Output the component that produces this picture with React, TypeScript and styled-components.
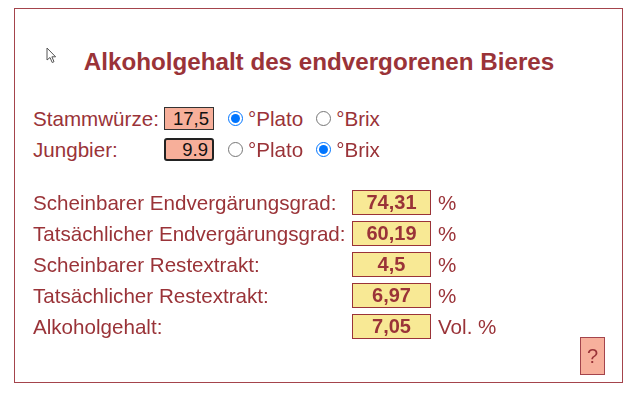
import React, { useEffect, useRef } from "react";
import styled, { createGlobalStyle } from "styled-components";

const GlobalStyle = createGlobalStyle`
  html, body {
    margin: 0;
    padding: 0;
    background: #ffffff;
  }
  body {
    font-family: "Liberation Sans", Arial, sans-serif;
  }
`;

const RED = "#9a3338";

const results = [
  { label: "Scheinbarer Endvergärungsgrad:", value: "74,31", unit: "%" },
  { label: "Tatsächlicher Endvergärungsgrad:", value: "60,19", unit: "%" },
  { label: "Scheinbarer Restextrakt:", value: "4,5", unit: "%" },
  { label: "Tatsächlicher Restextrakt:", value: "6,97", unit: "%" },
  { label: "Alkoholgehalt:", value: "7,05", unit: "Vol. %" },
];

const App: React.FC = () => {
  const focusRef = useRef<HTMLInputElement>(null);

  useEffect(() => {
    const el = focusRef.current;
    if (el) {
      el.focus();
      el.setSelectionRange(el.value.length, el.value.length);
    }
  }, []);

  return (
    <>
      <GlobalStyle />
      <Page>
        <Panel>
          <Pointer width="11" height="17" viewBox="0 0 11 17">
            <path
              d="M1 1 L1 13 L4 10.5 L6.2 15.5 L8 14.7 L5.9 9.8 L9.6 9.8 Z"
              fill="#ffffff"
              stroke="#555555"
              strokeWidth="1"
              strokeLinejoin="round"
            />
          </Pointer>
          <Title>Alkoholgehalt des endvergorenen Bieres</Title>

          <InputGrid>
            <Label>Stammwürze:</Label>
            <Entry defaultValue="17,5" />
            <RadioGroup>
              <Radio type="radio" name="stamm" defaultChecked />
              <Option>°Plato</Option>
              <Radio type="radio" name="stamm" />
              <Option>°Brix</Option>
            </RadioGroup>

            <Label>Jungbier:</Label>
            <Entry ref={focusRef} defaultValue="9.9" $focused />
            <RadioGroup>
              <Radio type="radio" name="jung" />
              <Option>°Plato</Option>
              <Radio type="radio" name="jung" defaultChecked />
              <Option>°Brix</Option>
            </RadioGroup>
          </InputGrid>

          <ResultGrid>
            {results.map((r) => (
              <React.Fragment key={r.label}>
                <Label>{r.label}</Label>
                <ValueBox>{r.value}</ValueBox>
                <Unit>{r.unit}</Unit>
              </React.Fragment>
            ))}
          </ResultGrid>

          <Footer>
            <HelpButton type="button">?</HelpButton>
          </Footer>
        </Panel>
      </Page>
    </>
  );
};

export default App;

const Page = styled.div`
  padding: 8px 0 0 14px;
`;

const Panel = styled.div`
  position: relative;
  box-sizing: border-box;
  width: 609px;
  border: 1px solid #a4444c;
  padding: 39px 17px 7px 18px;
`;

const Pointer = styled.svg`
  position: absolute;
  left: 31px;
  top: 38px;
`;

const Title = styled.h1`
  margin: 0;
  font-size: 24.2px;
  line-height: 28px;
  font-weight: bold;
  color: ${RED};
  text-align: center;
`;

const InputGrid = styled.div`
  display: grid;
  grid-template-columns: 131px 50px auto;
  grid-auto-rows: 31px;
  align-items: center;
  margin-top: 27px;
`;

const Label = styled.span`
  font-size: 20.6px;
  color: ${RED};
  white-space: nowrap;
`;

const Entry = styled.input<{ $focused?: boolean }>`
  box-sizing: border-box;
  width: 50px;
  height: 23px;
  margin: 0;
  padding: 0 4px;
  font-family: "Liberation Sans", Arial, sans-serif;
  font-size: 18.5px;
  color: #111111;
  text-align: right;
  background: #f7af9a;
  border: ${(p) => (p.$focused ? "2px solid #222222" : "1px solid #333333")};
  border-radius: ${(p) => (p.$focused ? "3px" : "0")};
  outline: none;
  caret-color: #111111;
`;

const RadioGroup = styled.div`
  display: flex;
  align-items: center;
`;

const Radio = styled.input`
  width: 15px;
  height: 15px;
  margin: 0 5px 0 14px;
  &:nth-of-type(2) {
    margin-left: 13px;
  }
`;

const Option = styled.span`
  font-size: 20.6px;
  color: ${RED};
`;

const ResultGrid = styled.div`
  display: grid;
  grid-template-columns: 319px 79px auto;
  grid-auto-rows: 31px;
  align-items: center;
  margin-top: 22px;
`;

const ValueBox = styled.div`
  box-sizing: border-box;
  height: 25px;
  line-height: 23px;
  border: 1px solid ${RED};
  background: #f8e995;
  color: ${RED};
  font-size: 20px;
  font-weight: bold;
  text-align: center;
`;

const Unit = styled.span`
  margin-left: 7px;
  font-size: 20.6px;
  color: ${RED};
`;

const Footer = styled.div`
  display: flex;
  justify-content: flex-end;
  margin-top: -5px;
`;

const HelpButton = styled.button`
  box-sizing: border-box;
  width: 25px;
  height: 38px;
  padding: 0;
  border: 1px solid #a4444c;
  background: #f7b09c;
  color: ${RED};
  font-family: "Liberation Sans", Arial, sans-serif;
  font-size: 20px;
  cursor: pointer;
`;
